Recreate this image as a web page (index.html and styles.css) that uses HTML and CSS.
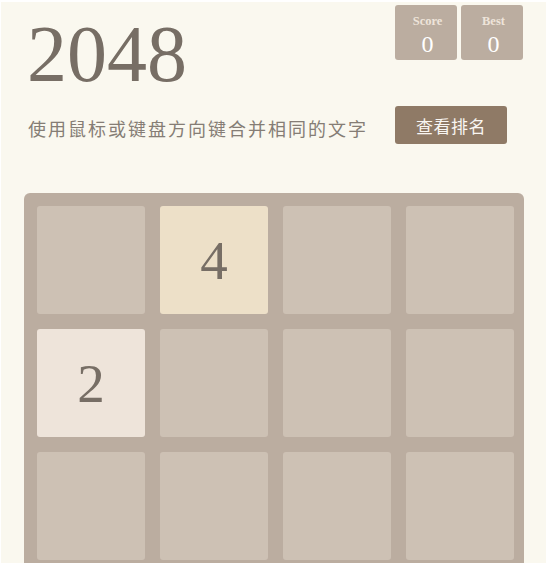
FILE: index.html
```html
<!DOCTYPE html>
<html lang="zh">
<head>
<meta charset="utf-8">
<title>2048</title>
<link rel="stylesheet" href="styles.css">
</head>
<body>
<div class="page">
  <div class="top">
    <h1 class="title">2048</h1>
    <div class="scores">
      <div class="score-box">
        <div class="score-label">Score</div>
        <div class="score-value">0</div>
      </div>
      <div class="score-box">
        <div class="score-label">Best</div>
        <div class="score-value">0</div>
      </div>
    </div>
  </div>
  <div class="intro">
    <p class="subtitle">使用鼠标或键盘方向键合并相同的文字</p>
    <button class="rank-btn">查看排名</button>
  </div>
  <div class="board">
    <div class="tile"></div>
    <div class="tile tile-4">4</div>
    <div class="tile"></div>
    <div class="tile"></div>
    <div class="tile tile-2">2</div>
    <div class="tile"></div>
    <div class="tile"></div>
    <div class="tile"></div>
    <div class="tile"></div>
    <div class="tile"></div>
    <div class="tile"></div>
    <div class="tile"></div>
    <div class="tile"></div>
    <div class="tile"></div>
    <div class="tile"></div>
    <div class="tile"></div>
  </div>
</div>
</body>
</html>
```

FILE: styles.css
```css
html, body {
  margin: 0;
  padding: 0;
  background: #ffffff;
}

.page {
  margin: 2px 4px 0 1px;
  height: 561px;
  overflow: hidden;
  background: #faf8ef;
  padding-left: 23px;
  box-sizing: border-box;
  font-family: "Liberation Serif", serif;
  color: #776e65;
}

.top {
  display: flex;
  justify-content: space-between;
  align-items: flex-start;
  height: 104px;
}

.title {
  margin: 12px 0 0 3px;
  font-size: 80px;
  line-height: 80px;
  font-weight: normal;
  color: #776e65;
}

.scores {
  display: flex;
  gap: 4px;
  margin: 3px 23px 0 0;
}

.score-box {
  width: 62px;
  height: 55px;
  box-sizing: border-box;
  padding: 9px 0 0 3px;
  background: #bbada0;
  border-radius: 3px;
  text-align: center;
}

.score-label {
  font-size: 12.5px;
  line-height: 14px;
  font-weight: bold;
  color: #eee4da;
}

.score-value {
  margin-top: 4px;
  font-size: 24px;
  line-height: 24px;
  color: #ffffff;
}

.intro {
  display: flex;
  justify-content: space-between;
  align-items: center;
  height: 38px;
  padding-right: 39px;
}

.subtitle {
  margin: 0;
  padding-top: 6px;
  padding-left: 4px;
  font-family: "Noto Sans CJK SC", sans-serif;
  font-size: 18px;
  letter-spacing: 2px;
  color: #857d75;
}

.rank-btn {
  width: 112px;
  height: 38px;
  border: none;
  border-radius: 3px;
  background: #8f7a66;
  color: #f9f6f2;
  font-family: "Noto Sans CJK SC", sans-serif;
  font-size: 17px;
  letter-spacing: 0.5px;
  padding: 0;
}

.board {
  margin-top: 49px;
  width: 500px;
  box-sizing: border-box;
  padding: 13px 10px 13px 13px;
  background: #bbada0;
  border-radius: 6px;
  display: grid;
  grid-template-columns: repeat(4, 108px);
  grid-auto-rows: 108px;
  gap: 15px;
}

.tile {
  background: #cdc1b4;
  border-radius: 3px;
  display: flex;
  align-items: center;
  justify-content: center;
  font-size: 55px;
  line-height: 1;
  color: #776e65;
}

.tile-2 {
  background: #eee4da;
}

.tile-4 {
  background: #ede0c8;
}
```
